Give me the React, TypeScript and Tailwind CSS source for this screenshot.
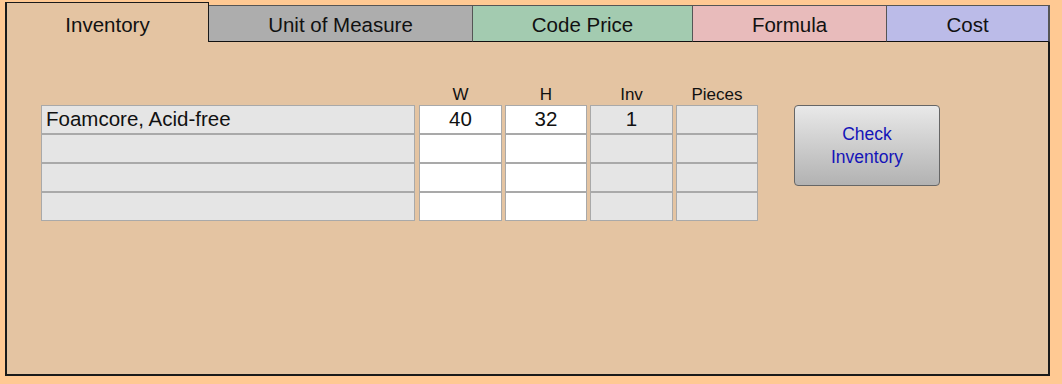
import React from "react";

const font = { fontFamily: '"Liberation Sans", Arial, sans-serif' };

function Cell({ w, white, text, left }: { w: string; white?: boolean; text?: string; left?: boolean }) {
  return (
    <div
      className={`${w} h-[29px] border border-[#a9a9a9] ${white ? "bg-white" : "bg-[#e5e5e5]"} text-[20.5px] leading-[24px] pt-[1px] text-[#111] ${left ? "pl-[4px] text-left" : "text-center"}`}
    >
      {text ?? "\u00a0"}
    </div>
  );
}

function Column({ w, white, first, left, header }: { w: string; white?: boolean; first?: string; left?: boolean; header?: string }) {
  return (
    <div className="flex flex-col">
      <div className="h-[18px] text-[17px] leading-[18px] text-center text-[#111] mt-[1px] mb-[1px]">{header ?? "\u00a0"}</div>
      <Cell w={w} white={white} text={first} left={left} />
      <Cell w={w} white={white} left={left} />
      <Cell w={w} white={white} left={left} />
      <Cell w={w} white={white} left={left} />
    </div>
  );
}

export default function App() {
  return (
    <div className="w-[1062px] h-[384px] bg-[#ffc993] pt-[2px] pl-[5px]" style={font}>
      <div className="flex items-end w-[1045px] h-[40px] text-[20.5px] text-[#111]">
        <div className="w-[204px] h-[40px] bg-[#e4c4a2] border-l-2 border-t border-r border-[#1a1a1a] flex items-center justify-center pt-[6px]">
          Inventory
        </div>
        <div className="w-[264px] h-[37px] bg-[#adadad] border-t border-r border-[#555] border-b border-b-[#111] flex items-center justify-center pt-[3px]">
          Unit of Measure
        </div>
        <div className="w-[220px] h-[37px] bg-[#a3cbb0] border-t border-r border-[#555] border-b border-b-[#111] flex items-center justify-center pt-[3px]">
          Code Price
        </div>
        <div className="w-[194px] h-[37px] bg-[#e8bbbb] border-t border-r border-[#555] border-b border-b-[#111] flex items-center justify-center pt-[3px]">
          Formula
        </div>
        <div className="flex-1 h-[37px] bg-[#bbbbe8] border-t border-r-2 border-[#555] border-b border-b-[#111] flex items-center justify-center pt-[3px]">
          Cost
        </div>
      </div>
      <div className="w-[1045px] h-[334px] bg-[#e4c4a2] border-l-2 border-r-2 border-b-2 border-[#1a1a1a] pt-[43px] pl-[34px]">
        <div className="flex items-start">
          <Column w="w-[374px]" first="Foamcore, Acid-free" left />
          <div className="w-[4px]" />
          <Column w="w-[83px]" white first="40" header="W" />
          <div className="w-[3px]" />
          <Column w="w-[82px]" white first="32" header="H" />
          <div className="w-[3px]" />
          <Column w="w-[83px]" first="1" header="Inv" />
          <div className="w-[3px]" />
          <Column w="w-[82px]" header="Pieces" />
          <div className="ml-[36px] mt-[20px] w-[146px] h-[81px] rounded-[4px] border border-[#666] bg-gradient-to-b from-[#e9e9e9] to-[#b2b2b2] flex flex-col items-center justify-center text-[17.5px] leading-[23px] text-[#1414b8]">
            <span>Check</span>
            <span>Inventory</span>
          </div>
        </div>
      </div>
    </div>
  );
}
